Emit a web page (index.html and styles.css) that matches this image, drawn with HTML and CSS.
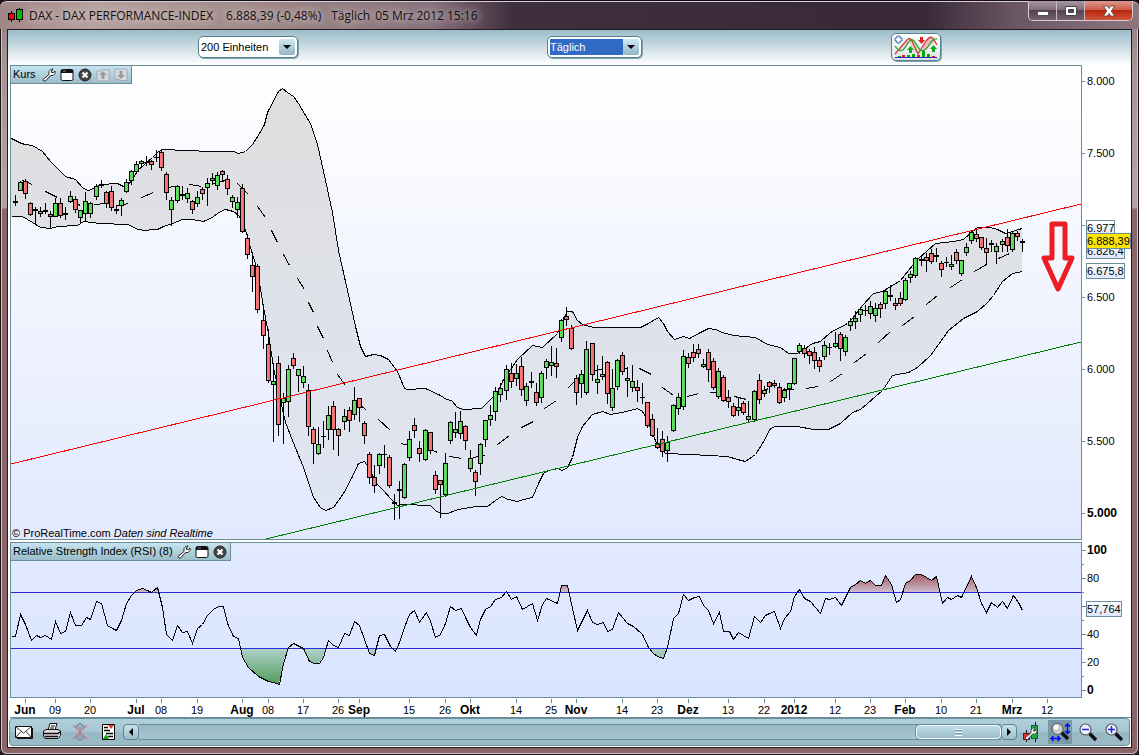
FILE: index.html
```html
<!DOCTYPE html>
<html lang="de">
<head>
    <meta charset="UTF-8">
    <meta name="viewport" content="width=device-width, initial-scale=1.0">
    <title>DAX - DAX PERFORMANCE-INDEX</title>
    <link rel="stylesheet" href="styles.css">
</head>
<body>
    <!-- Shared icons -->
    <svg class="symbols" aria-hidden="true">
        <symbol id="wrench" viewBox="0 0 14 14">
            <path d="M1 11.5 7 6.5V3.5L9.5 1H11L9.5 3V4.5H11.5L13 3V5.5L11 7.5H8.5L3.5 13H2L1 12Z" fill="#fff" stroke="#222"/>
        </symbol>
        <symbol id="panel-window" viewBox="0 0 14 14">
            <rect x="1" y="1.5" width="12" height="11" rx="1.5" fill="#fff" stroke="#111"/>
            <path d="M1 5V3Q1 1.5 2.5 1.5H11.5Q13 1.5 13 3V5Z" fill="#111"/>
            <path d="M3 3H6" stroke="#889"/>
        </symbol>
        <symbol id="close" viewBox="0 0 14 14">
            <circle cx="7" cy="7" r="6" fill="#444" stroke="#222"/>
            <path d="M4.5 4.5 9.5 9.5M9.5 4.5 4.5 9.5" stroke="#fff" stroke-width="2.2"/>
        </symbol>
        <symbol id="move" viewBox="0 0 14 14">
            <path d="M1 3H5L6 1.5H13V13H1Z" fill="#d6dcdd" stroke="#a3adb0"/>
            <path d="M7 3 11 7H8.5V11H5.5V7H3Z" fill="#979d9f"/>
        </symbol>
        <symbol id="lens" viewBox="0 0 20 20">
            <path d="M11.5 11.5 18 18" stroke="#111" stroke-width="3.5"/>
            <circle cx="7.5" cy="7.5" r="5.5" fill="#eef5ff" stroke="#555" stroke-width="1.2"/>
        </symbol>
    </svg>

    <div class="window">
        <header class="titlebar">
            <svg class="app-icon" width="16" height="16" viewBox="0 0 16 16" aria-hidden="true">
                <path d="M3.5 4V15M11.5 1V15" stroke="#000"/>
                <rect x=".5" y="6.5" width="6" height="6" fill="#f00" stroke="#000"/>
                <rect x="8.5" y="2.5" width="6" height="10" fill="#0b0" stroke="#000"/>
            </svg>
            <h1 class="title">
                <span class="name">DAX - DAX PERFORMANCE-INDEX</span>
                <span class="quote">6.888,39 (-0,48%)</span>
                <span class="period">Täglich</span>
                <span>05 Mrz 2012 15:16</span>
            </h1>
            <div class="window-buttons">
                <button class="minimize" aria-label="Minimieren">
                    <svg width="12" height="12" viewBox="0 0 12 12"><rect x=".5" y="6.5" width="11" height="4" fill="#fff" stroke="#555"/></svg>
                </button>
                <button class="maximize" aria-label="Maximieren">
                    <svg width="12" height="12" viewBox="0 0 12 12"><path d="M.5 1.5H11.5V10.5H.5ZM3.500 4.500V7.500H8.500V4.500Z" fill="#fff" fill-rule="evenodd" stroke="#444"/></svg>
                </button>
                <button class="close" aria-label="Schließen">
                    <svg width="12" height="12" viewBox="0 0 12 12"><path d="M.5 1H4.200L6 3.500 7.800 1H11.500L8.300 6 11.500 11H7.800L6 8.500 4.200 11H.5L3.700 6Z" fill="#fff" stroke="#544" stroke-width=".8"/></svg>
                </button>
            </div>
        </header>

        <main class="client">
            <div class="toolbar">
                <div class="combo units">
                    <select aria-label="Anzahl Einheiten"><option>200 Einheiten</option></select>
                    <span class="combo-arrow"></span>
                </div>
                <div class="combo timeframe">
                    <select aria-label="Zeiteinheit"><option>Täglich</option></select>
                    <span class="combo-arrow"></span>
                </div>
                <button class="indicator-button" aria-label="Indikator hinzufügen">
                    <svg width="44" height="24" viewBox="0 0 44 24">
                        <path d="M7 14 15 4 18 5 24 18 31 9 25 17 21 18 16 8Z" fill="#f5caca"/>
                        <path d="M28 12 35 2 38 2 41 7 36 10 31 16Z" fill="#f5bcbc"/>
                        <path d="M18 6H20L27 15 24 19Z" fill="#c8efc0"/>
                        <path d="M1 19 13 5Q16 2 18 6L24 19 32 6Q37-1 40 5L43 10" fill="none" stroke="#d03838" stroke-width="1.300"/>
                        <path d="M1 11Q7 20 12 11T20 6L26 15Q31 17 35 10T43 4" fill="none" stroke="#22a522" stroke-width="1.300"/>
                        <path d="M3 1H6V3H8V6H6V8H3V6H1V3H3Z" fill="#fff" stroke="#3d62b5"/>
                        <path d="M26 2H29V5H31L27.500 9 24 5H26Z" fill="#e32222"/>
                        <path d="M16.500 11 20 15H18V18H15V15H13ZM39.500 10 43 14H41V17H38V14H36Z" fill="#0caa20"/>
                        <path d="M4 22V21H7V22ZM13 22V20H16V22ZM18 22V19H21V22ZM28 22V16H31V22ZM33 22V19H36V22Z" fill="#0a0"/>
                        <path d="M8 20H11V22H8ZM23 20H26V22H23ZM38 21H41V22H38Z" fill="#d22"/>
                        <path d="M1 22.500H43" stroke="#2828c0"/>
                    </svg>
                </button>
            </div>

            <section class="panel price-panel">
                <div class="panel-header">
                    <h2>Kurs</h2>
                    <button aria-label="Einstellungen"><svg width="14" height="14"><use href="#wrench"/></svg></button>
                    <button aria-label="Fenster"><svg width="14" height="14"><use href="#panel-window"/></svg></button>
                    <button aria-label="Schließen"><svg width="14" height="14"><use href="#close"/></svg></button>
                    <button aria-label="Nach oben"><svg width="14" height="14"><use href="#move"/></svg></button>
                    <button aria-label="Nach unten"><svg class="flip" width="14" height="14"><use href="#move"/></svg></button>
                </div>
                <svg class="chart" id="price-chart" viewBox="10 65 1121 475" role="img" aria-label="DAX Kursverlauf">
                    <defs>
                        <linearGradient id="price-bg" x1="0" y1="0" x2="0" y2="1">
                            <stop offset="0" stop-color="#fff"/>
                            <stop offset="1" stop-color="#e2e9fe"/>
                        </linearGradient>
                        <linearGradient id="band-bg" x1="0" y1="0" x2="0" y2="1">
                            <stop offset="0" stop-color="#dedede"/>
                            <stop offset="1" stop-color="#dfe5f3"/>
                        </linearGradient>
                        <linearGradient id="tag-bg" x1="0" y1="0" x2="0" y2="1">
                            <stop offset="0" stop-color="#fff"/>
                            <stop offset="1" stop-color="#dde7ff"/>
                        </linearGradient>
                        <linearGradient id="up-bg"><stop offset="0" stop-color="#6aec6a"/><stop offset="1" stop-color="#4ccf4c"/></linearGradient>
                        <linearGradient id="down-bg"><stop offset="0" stop-color="#ff8484"/><stop offset="1" stop-color="#e46464"/></linearGradient>
                    </defs>
                    <rect class="plot" x="10.500" y="65.500" width="1071" height="474" fill="url(#price-bg)"/>
                    <g id="bands" class="crisp"></g>
                    <g id="candles" class="crisp"></g>
                    <path class="trend-up crisp" d="M11 464 1081 204"/>
                    <path class="trend-low crisp" d="M266 539 1081 342"/>
                    <path class="arrow" d="M1052 224H1065V258H1072L1058 289 1044 258H1052Z"/>
                    <g id="price-axis"></g>
                </svg>
                <p class="copyright">© ProRealTime.com <em>Daten sind Realtime</em></p>
            </section>

            <section class="panel rsi-panel">
                <div class="panel-header">
                    <h2>Relative Strength Index (RSI) (8)</h2>
                    <button aria-label="Einstellungen"><svg width="14" height="14"><use href="#wrench"/></svg></button>
                    <button aria-label="Fenster"><svg width="14" height="14"><use href="#panel-window"/></svg></button>
                    <button aria-label="Schließen"><svg width="14" height="14"><use href="#close"/></svg></button>
                </div>
                <svg class="chart" id="rsi-chart" viewBox="10 542 1121 176" role="img" aria-label="Relative Strength Index">
                    <defs>
                        <linearGradient id="rsi-bg" x1="0" y1="0" x2="0" y2="1">
                            <stop offset="0" stop-color="#e2eaff"/>
                            <stop offset="1" stop-color="#d9e4ff"/>
                        </linearGradient>
                        <linearGradient id="over-bg" gradientUnits="userSpaceOnUse" x1="0" y1="572" x2="0" y2="592">
                            <stop offset="0" stop-color="#a04c54"/>
                            <stop offset="1" stop-color="#cdbccd"/>
                        </linearGradient>
                        <linearGradient id="under-bg" gradientUnits="userSpaceOnUse" x1="0" y1="648" x2="0" y2="686">
                            <stop offset="0" stop-color="#b2d2cc"/>
                            <stop offset="1" stop-color="#4c9a58"/>
                        </linearGradient>
                        <clipPath id="over-clip"><rect x="11" y="543" width="1070" height="49"/></clipPath>
                        <clipPath id="under-clip"><rect x="11" y="648" width="1070" height="49"/></clipPath>
                    </defs>
                    <rect class="plot" x="10.500" y="542.500" width="1071" height="155" fill="url(#rsi-bg)"/>
                    <g id="rsi" class="crisp"></g>
                    <g id="rsi-axis"></g>
                    <g id="time-axis"></g>
                </svg>
            </section>

            <footer class="bottombar">
                <div class="tools">
                    <button aria-label="E-Mail">
                        <svg width="20" height="20" viewBox="0 0 20 20"><path d="M1.500 4.500H17.500V15.500H1.500Z" fill="#fff" stroke="#111"/><path d="M2 5 9.500 11 17 5M2 15 7 9.500M17 15 12 9.500" fill="none" stroke="#333"/><path d="M3 16.500H18.500V6" fill="none" stroke="#111"/></svg>
                    </button>
                    <button aria-label="Drucken">
                        <svg width="20" height="20" viewBox="0 0 20 20"><path d="M6 8 8 1.500H15L13 8Z" fill="#fff" stroke="#111"/><path d="M9 4H13M8 6H12" stroke="#111"/><path d="M1.500 9 4 7.500H16L18.500 9V13.500L16 16.500H3L1.500 14Z" fill="#ddd" stroke="#111"/><path d="M2 11.500H16L18 10M3 14.500H16" stroke="#111" fill="none" stroke-width="1.500"/></svg>
                    </button>
                    <button class="unlink" aria-label="Verknüpfung">
                        <svg width="20" height="20" viewBox="0 0 20 20"><path d="M7 7V4Q10 0 13 4V7M7 13V16Q10 20 13 16V13M10 5V15" fill="none" stroke="#6f8e9b" stroke-width="2"/><path d="M3 3 17 17M17 3 3 17" stroke="#d46f78" stroke-width="1.400"/></svg>
                    </button>
                    <button aria-label="Liste">
                        <svg width="20" height="20" viewBox="0 0 20 20"><path d="M4.500 2.500H16.500V17.500H4.500Z" fill="#fff" stroke="#000"/><path d="M6 5.500H10M6 8.500H12M8 11.500H15M10 14.500H15" stroke="#000" stroke-width="1.500"/><path d="M10 3H16L13 7Z" fill="#e33"/><path d="M5 17 8 12 11 17Z" fill="#0a0"/></svg>
                    </button>
                </div>
                <div class="scrollbar">
                    <button class="scroll-step" aria-label="Zurück"><svg width="6" height="8" viewBox="0 0 6 8"><path d="M5 0V8L1 4Z"/></svg></button>
                    <div class="scroll-track"><div class="scroll-thumb"><span></span></div></div>
                    <button class="scroll-step" aria-label="Vor"><svg width="6" height="8" viewBox="0 0 6 8"><path d="M1 0V8L5 4Z"/></svg></button>
                </div>
                <div class="tools zoom-tools">
                    <button aria-label="Darstellung">
                        <svg width="20" height="20" viewBox="0 0 20 20"><path d="M13.500 0V20M4.500 8V20" stroke="#111"/><rect x="9.500" y="3.500" width="6" height="13" fill="#1cae3c" stroke="#064"/><rect x="1.500" y="11.500" width="6" height="6" fill="#d33" stroke="#711"/><path d="M3 16 9 11V8L11.500 5.500H13L11.500 8V9H13.500L15 7.500V10L13 12H10.500L5 18Z" fill="#fff" stroke="#333" stroke-width=".8"/></svg>
                    </button>
                    <button class="selected" aria-label="Automatischer Zoom">
                        <svg width="20" height="20" viewBox="0 0 20 20"><path d="M11 10 18 17" stroke="#111" stroke-width="3.500"/><circle cx="7.500" cy="7" r="5.500" fill="#ccc" stroke="#555"/><circle cx="6" cy="5" r="2.500" fill="#fff"/><path d="M17.500 2V11M15 4.500 17.500 2 20 4.500M15 9 17.500 11.500 20 9M2 16.500H10M3.500 14 1 16.500 3.500 19M7.500 14 10 16.500 7.500 19" fill="none" stroke="#00f" stroke-width="1.400"/></svg>
                    </button>
                    <button aria-label="Verkleinern">
                        <svg width="20" height="20" viewBox="0 0 20 20"><use href="#lens"/><path d="M4 7.500H11" stroke="#22e" stroke-width="1.500"/></svg>
                    </button>
                    <button aria-label="Vergrößern">
                        <svg width="20" height="20" viewBox="0 0 20 20"><use href="#lens"/><path d="M4 7.500H11M7.500 4V11" stroke="#22e" stroke-width="1.500"/></svg>
                    </button>
                </div>
            </footer>
        </main>
    </div>

    <script src="chart.js"></script>
</body>
</html>
```

FILE: styles.css
```css
* {
    box-sizing: border-box;
}
body {
    margin: 0;
    background-color: #14101a;
    font-family: "Liberation Sans", Arial, sans-serif;
    font-size: 11px;
    color: #000;
}
button {
    padding: 0;
    border: none;
    background: none;
    display: flex;
    align-items: center;
    justify-content: center;
}
svg {
    display: block;
}
.symbols {
    position: absolute;
    width: 0;
    height: 0;
}
.window {
    padding: 0 7px 7px;
    border-radius: 7px;
    background: linear-gradient(#8d7577, #a59494 60px, #b3a3a3 207px, #8a6466 210px, #8a6466);
    box-shadow: inset 0 0 0 1px #1b1218, inset 0 0 0 2px #d2c3c5;
}

/* Title bar */
.titlebar {
    height: 29px;
    margin: 0 -7px;
    padding-left: 8px;
    display: flex;
    align-items: center;
    border-radius: 7px 7px 0 0;
    border-top: 1px solid #120d18;
    box-shadow: inset 0 1px 0 #d9cdd2;
    background: linear-gradient(90deg, #a18688, #b5a09d 8%, #9a8486 25%, #84707a 38%, #3f2e3e 45%, #382838 81%, #6a5662 89%, #8d7680);
}
.title {
    margin: 0 0 0 5px;
    display: flex;
    font-family: "Open Sans", "Noto Sans", sans-serif;
    font-size: 12px;
    font-weight: normal;
    white-space: nowrap;
    color: #111;
    text-shadow: 0 0 8px #d8c9c5, 0 0 8px #d8c9c5;
}
.name {
    margin-right: 13px;
}
.quote {
    margin-right: 10px;
}
.period {
    margin-right: 5px;
}
.window-buttons {
    display: flex;
    align-self: flex-start;
    margin-left: auto;
    margin-right: 6px;
    border: 1px solid #d9cdd2;
    border-top: none;
    border-radius: 0 0 5px 5px;
    overflow: hidden;
}
.window-buttons button {
    width: 28px;
    height: 19px;
    border-right: 1px solid #c8babf;
    background: linear-gradient(#a8979f, #7d6b76 48%, #53414f 50%, #75636f);
}
.window-buttons .close {
    width: 47px;
    border-right: none;
    background: linear-gradient(#dc9a8c, #cc5a45 48%, #b8240d 50%, #d0553a);
}

/* Client area */
.client {
    border: 1px solid #241a20;
    background-color: #fff;
}
.toolbar {
    height: 35px;
    padding: 0 190px 2px;
    display: flex;
    align-items: center;
    justify-content: space-between;
    background: linear-gradient(#9bbcc8, #fff);
}
.combo {
    height: 22px;
    padding: 2px;
    display: flex;
    border: 1px solid #54808f;
    border-radius: 5px;
    background-color: #fff;
    box-shadow: 1px 1px 0 #7fa3b0;
}
.combo select {
    flex: 1;
    min-width: 0;
    padding: 0;
    border: none;
    appearance: none;
    background: none;
    font: inherit;
    color: inherit;
}
.units {
    width: 100px;
}
.timeframe {
    width: 95px;
}
.timeframe select {
    background-color: #316ac5;
    color: #fff;
}
.combo-arrow {
    width: 16px;
    display: flex;
    align-items: center;
    justify-content: center;
    border-radius: 2px;
    background: linear-gradient(#cdeaf4, #94b6c2);
}
.combo-arrow::before {
    content: "";
    border: 4px solid transparent;
    border-top-color: #000;
    border-bottom: none;
}
.indicator-button {
    width: 50px;
    height: 28px;
    border: 1px solid #54808f;
    border-radius: 5px;
    background: linear-gradient(#fff, #dde3e6);
    box-shadow: 1px 1px 0 #7fa3b0;
}

/* Chart panels */
.panel {
    position: relative;
    margin-left: 2px;
}
.price-panel {
    margin-bottom: 2px;
}
.panel-header {
    position: absolute;
    top: 0;
    left: 0;
    height: 19px;
    padding: 0 3px 0 2px;
    display: flex;
    align-items: center;
    gap: 4px;
    border: 1px solid #6b8c99;
    background: linear-gradient(#c5e4ef, #9bbdc9);
}
.panel-header h2 {
    margin: 0;
    padding-bottom: 2px;
    font-size: 11px;
    font-weight: normal;
    white-space: nowrap;
}
.price-panel h2 {
    margin-right: 2px;
}
.flip {
    transform: scaleY(-1);
}
.chart {
    width: 100%;
    height: auto;
}
.copyright {
    position: absolute;
    left: 2px;
    bottom: 0;
    margin: 0;
    line-height: 14px;
}
.crisp {
    shape-rendering: crispEdges;
}
.plot {
    stroke: #6b8c99;
}
.band-fill {
    fill: url(#band-bg);
}
.line {
    fill: none;
    stroke: #000;
}
.up {
    fill: url(#up-bg);
    stroke: #000;
}
.down {
    fill: url(#down-bg);
    stroke: #000;
}
.trend-up {
    stroke: #f00;
}
.trend-low {
    stroke: #008000;
}
.arrow {
    fill: none;
    stroke: #ee1c24;
    stroke-width: 5;
    stroke-linejoin: round;
}
.tick {
    stroke: #6b8c99;
}
.level {
    stroke: #2a2ad8;
}
.chart text {
    font-size: 11px;
}
.chart .major {
    font-size: 12px;
    font-weight: bold;
}
.time {
    text-anchor: middle;
}
.tag {
    fill: url(#tag-bg);
    stroke: #6b8c99;
}
.tag.last {
    fill: #ffe600;
}

/* Bottom bar */
.bottombar {
    height: 28px;
    margin: 0 1px 1px;
    padding: 0 5px 0 4px;
    display: flex;
    align-items: center;
    gap: 5px;
    border: 1px solid #6b8c99;
    border-radius: 4px;
    background: linear-gradient(#b0d0dc, #a4c5d1 50%, #98b8c4 52%, #9bbbc7);
}
.tools {
    display: flex;
    gap: 8px;
}
.zoom-tools {
    gap: 6px;
}
.tools button {
    width: 20px;
    height: 24px;
}
.tools .selected {
    width: 24px;
    background-color: #7899a6;
}
.unlink {
    opacity: 0.8;
}
.scrollbar {
    flex: 1;
    height: 16px;
    display: flex;
}
.scroll-step {
    width: 16px;
    border: 1px solid #5f828f;
    border-radius: 4px;
    background: linear-gradient(#c5e2ec, #9dbfcb);
}
.scroll-track {
    flex: 1;
    display: flex;
    justify-content: flex-end;
    border-top: 1px solid #6b8c99;
    border-bottom: 1px solid #6b8c99;
    background: linear-gradient(#98b8c4, #a5c6d2);
}
.scroll-thumb {
    width: 85px;
    display: flex;
    align-items: center;
    justify-content: center;
    border: 1px solid #fff;
    border-radius: 4px;
    outline: 1px solid #6b8c99;
    background: linear-gradient(#bedce7, #9cbeca);
}
.scroll-thumb span {
    width: 7px;
    height: 7px;
    background: repeating-linear-gradient(#fff 0 1px, #7798a5 1px 2px, transparent 2px 3px);
}
```

FILE: chart.js
```js
// Candles: x, high, body top, body bottom, low, direction (1 up, -1 down, 0 doji)
const candles = [
    [15,195,201,202,205,0],[20,181,182,190,190,1],[25,179,181,193,198,-1],[30,202,203,214,215,-1],[35,207,209,210,223,0],
    [40,207,211,213,216,-1],[45,203,210,211,213,0],[50,211,214,216,227,-1],[55,198,203,216,216,1],[60,198,203,215,217,-1],
    [65,207,213,214,219,1],[70,191,196,201,202,1],[75,196,199,209,212,-1],[80,210,210,217,222,1],[85,192,201,213,220,1],
    [90,202,203,213,217,1],[96,184,186,196,199,1],[101,180,184,185,187,0],[106,191,192,203,207,-1],[111,186,191,207,210,-1],
    [116,205,209,210,213,0],[121,198,200,205,215,1],[126,179,182,191,192,1],[131,170,171,180,184,1],[136,161,164,171,173,1],
    [141,160,161,163,165,1],[146,156,162,162,165,0],[151,160,161,164,169,-1],[156,150,157,157,161,0],[161,149,152,167,170,-1],
    [166,172,174,192,199,-1],[171,197,200,209,225,1],[177,185,186,200,202,1],[182,186,194,195,199,0],[187,188,193,198,202,1],
    [192,200,201,209,213,-1],[197,191,197,203,206,1],[202,187,189,193,199,-1],[207,178,183,187,205,1],[212,173,178,180,184,1],
    [217,172,175,185,189,1],[222,170,171,174,181,-1],[227,175,179,188,194,-1],[232,195,197,201,207,1],[237,197,202,209,217,1],
    [242,184,188,231,232,-1],[247,234,238,254,258,-1],[252,255,265,276,291,-1],[257,264,266,309,312,-1],[263,305,320,335,348,-1],
    [268,329,344,380,382,-1],[273,363,381,384,441,1],[278,356,363,424,435,-1],[283,393,398,402,443,1],[288,365,369,401,416,1],
    [293,353,358,365,368,-1],[298,369,369,375,391,1],[303,366,376,382,387,1],[308,384,390,426,435,-1],[313,427,429,443,463,-1],
    [318,427,444,453,454,1],[323,421,436,436,447,0],[328,406,415,429,439,1],[333,401,406,429,449,-1],[338,428,429,435,455,-1],
    [344,409,416,421,429,1],[349,407,410,420,431,-1],[354,387,400,414,419,1],[359,398,398,407,421,-1],[364,421,423,435,443,-1],
    [369,452,454,477,483,-1],[374,465,477,485,492,-1],[379,453,454,465,473,1],[384,445,454,454,467,0],[389,455,457,485,487,-1],
    [394,494,502,503,519,0],[399,481,489,490,518,0],[404,463,464,497,498,1],[409,431,439,457,460,1],[414,418,425,430,437,-1],
    [419,441,448,453,461,-1],[425,429,430,459,460,1],[430,432,432,450,453,-1],[435,471,475,489,493,-1],[440,480,480,484,517,-1],
    [445,453,463,494,496,1],[450,421,422,440,443,1],[455,412,429,432,437,1],[460,411,421,433,438,1],[465,425,426,440,449,-1],
    [470,450,458,468,471,1],[475,470,472,481,495,-1],[480,443,444,463,474,1],[485,420,420,439,446,1],[490,405,415,419,425,1],
    [495,387,391,411,420,1],[500,383,388,394,401,1],[506,365,369,390,399,1],[511,363,373,381,387,-1],[516,364,373,378,385,1],
    [521,357,366,389,395,-1],[526,383,386,400,405,1],[531,372,381,382,387,0],[536,383,392,402,405,-1],[541,371,373,397,402,1],
    [546,359,361,367,378,1],[551,346,362,365,375,1],[556,348,363,366,377,-1],[561,319,320,337,341,1],[566,307,316,319,325,-1],
    [571,325,328,348,349,-1],[576,375,378,392,404,-1],[581,370,374,383,397,1],[586,341,349,392,394,1],[592,343,343,374,380,-1],
    [597,365,379,382,393,1],[602,356,374,376,379,1],[607,361,362,393,403,-1],[612,369,388,407,410,1],[617,359,360,386,389,1],
    [622,352,355,371,374,-1],[627,367,378,380,396,1],[632,365,381,387,391,1],[637,380,387,390,401,-1],[642,383,397,397,403,0],
    [647,402,402,425,427,-1],[652,414,419,435,436,-1],[657,428,443,447,448,-1],[662,431,439,451,456,-1],[667,436,442,450,461,1],
    [673,404,405,430,431,1],[678,393,397,408,414,1],[683,350,356,406,409,1],[688,353,357,363,367,-1],[693,344,352,357,361,-1],
    [698,344,349,353,357,-1],[703,359,364,366,367,1],[708,349,352,369,381,-1],[713,358,361,387,389,-1],[718,368,371,396,398,1],
    [723,375,377,400,401,-1],[728,390,397,401,407,-1],[733,403,406,415,416,-1],[738,397,407,410,415,1],[743,401,403,412,414,-1],
    [748,401,416,419,421,1],[754,390,391,419,421,1],[759,374,380,399,403,-1],[764,386,390,393,396,1],[769,381,382,386,392,-1],
    [774,380,383,385,387,-1],[779,383,387,402,403,-1],[784,388,390,397,401,1],[789,383,383,388,399,1],[794,358,358,383,384,1],
    [799,343,345,351,353,1],[804,345,348,353,357,-1],[809,349,351,355,363,-1],[814,347,352,360,368,-1],[819,357,360,366,371,-1],
    [824,341,345,356,359,1],[829,343,347,347,354,0],[835,332,343,346,347,1],[840,332,334,348,360,-1],[845,335,337,351,355,1],
    [850,318,321,325,330,1],[855,311,318,321,328,1],[860,307,309,314,321,1],[865,305,310,310,315,0],[870,301,306,313,318,1],
    [875,303,308,315,321,1],[880,302,304,308,317,-1],[885,289,291,303,308,1],[890,285,295,296,300,0],[895,298,303,305,309,-1],
    [900,292,298,303,305,-1],[905,278,280,299,300,1],[910,271,274,277,282,1],[915,257,258,275,277,1],[921,255,259,260,265,0],
    [926,253,257,260,271,-1],[931,249,253,261,263,-1],[936,248,255,256,261,0],[941,261,263,269,276,-1],[946,257,262,262,266,0],
    [951,255,264,266,269,1],[956,249,252,260,263,-1],[961,260,260,273,275,1],[966,243,247,252,255,1],[971,231,232,240,243,1],
    [976,229,234,238,241,-1],[981,237,237,247,249,-1],[986,238,248,252,264,-1],[991,240,243,244,251,0],[996,243,246,251,263,1],
    [1002,239,241,244,251,1],[1007,229,237,245,251,-1],[1012,231,233,249,251,1],[1017,231,233,236,240,-1],[1022,239,241,242,251,0]
];

// Bollinger bands
const upperBand = '11,138 21,143 25,144 32,145 42,151 50,161 65,176 75,179 83,188 88,190 93,188 100,184 117,183 125,187 132,179 137,170 143,165 152,157 157,152 162,149 210,151 233,151 238,153 245,151 252,144 259,133 264,124 267,112 278,91 282,88 287,92 293,96 298,103 310,123 317,144 325,180 332,212 338,250 347,290 355,326 360,346 365,356 373,354 380,355 388,359 397,371 404,388 407,389 425,388 440,395 446,399 451,400 457,407 463,409 481,408 490,399 497,392 503,379 508,372 517,359 532,345 542,347 557,333 563,318 567,311 572,311 577,320 582,324 593,327 640,327 648,323 658,317 663,323 667,331 674,339 683,336 689,338 700,332 708,328 715,329 722,332 733,335 755,337 767,344 780,347 788,353 797,353 802,350 812,343 820,341 830,332 847,323 852,318 862,305 873,293 882,291 900,280 908,270 917,259 935,243 953,241 963,239 972,231 977,227 990,227 997,229 1005,233 1012,231 1018,229 1022,228';
const lowerBand = '11,216 22,216 32,222 40,227 50,228 57,226 77,225 83,221 100,223 127,224 132,226 137,229 145,230 152,229 157,229 163,226 172,223 182,219 192,219 203,221 212,217 218,212 225,209 233,211 238,215 243,223 248,240 250,247 257,270 263,307 268,333 273,367 280,400 285,422 292,440 303,467 313,497 320,507 325,510 333,507 343,493 352,476 358,463 364,461 370,470 375,482 383,490 390,498 397,505 403,504 430,505 435,510 440,513 447,513 458,509 475,506 487,506 495,500 501,496 508,499 517,501 523,499 532,497 538,483 543,473 548,470 557,468 562,470 567,467 572,457 577,437 582,426 592,414 602,411 610,414 622,412 637,408 642,411 647,420 652,433 657,445 665,453 690,454 727,456 737,459 745,461 755,454 762,443 770,428 775,426 797,426 813,429 828,429 840,423 852,412 860,409 882,390 892,375 908,372 917,367 930,355 938,344 948,330 963,318 977,311 987,302 993,295 1002,281 1012,273 1022,271';

// Dashes of the moving average
const average = [
    [22,180,32,184],[45,191,57,197],[70,200,80,205],[94,204,105,203],[117,205,128,203],[141,197,153,192],[165,187,177,186],[189,184,201,186],
    [213,183,225,180],[237,183,248,194],[257,206,265,217],[271,230,277,242],[283,254,289,265],[297,278,304,289],[308,302,313,312],
    [317,326,323,338],[327,350,332,362],[337,374,345,385],[357,402,366,410],[378,419,390,430],[401,443,412,446],[426,447,437,452],
    [449,456,461,458],[473,457,485,455],[497,444,509,435],[521,427,533,421],[544,408,556,400],[567,388,578,377],[591,370,602,369],
    [615,370,627,368],[639,368,651,374],[662,387,673,395],[687,396,698,393],[710,392,722,393],[734,396,746,399],[757,393,768,388],
    [782,389,793,389],[806,388,818,386],[830,381,842,373],[854,362,866,353],[878,342,890,331],[902,325,914,316],[926,304,937,295],
    [950,287,962,279],[974,271,986,264],[998,258,1009,253]
];

const rsiLine = '11,636 15,636 20,614 25,624 31,640 36,635 40,637 45,635 51,639 55,621 60,633 65,631 70,612 75,625 81,625 86,617 90,619 96,601 101,603 107,625 112,628 116,630 121,620 126,603 131,595 136,590 142,588 147,590 151,592 157,587 162,607 166,634 172,640 177,625 182,632 187,631 192,643 197,628 202,624 207,615 213,609 218,606 223,606 227,623 233,636 238,638 242,657 248,667 258,676 268,681 273,682 279,684 283,663 288,647 293,643 303,648 309,661 314,663 319,663 323,657 328,640 333,645 338,647 344,633 349,635 354,621 359,625 364,639 369,653 374,655 379,635 384,634 390,646 395,651 399,642 404,627 409,614 414,610 419,622 426,612 430,621 435,637 440,634 445,623 450,606 455,610 461,608 465,617 470,627 476,635 480,619 485,609 490,606 495,599 501,597 506,591 511,599 516,596 522,609 532,603 537,620 542,604 546,598 557,603 561,585 567,585 572,608 577,630 587,610 592,622 597,624 603,622 607,631 612,629 618,612 627,623 633,626 642,634 648,647 653,653 657,656 663,658 667,647 673,618 678,613 683,594 688,600 694,597 699,596 703,605 708,610 713,623 719,612 723,631 729,631 733,639 738,632 743,635 748,638 754,616 760,622 765,615 769,613 774,611 780,628 784,618 790,611 794,596 799,589 804,598 810,601 820,613 825,598 829,599 835,597 841,605 850,587 855,584 860,580 865,583 870,580 875,585 881,585 885,575 891,584 896,602 900,599 905,583 910,580 915,574 921,574 931,580 936,576 942,603 947,597 951,599 957,595 961,597 971,576 976,587 981,603 986,612 991,602 997,607 1002,601 1007,608 1013,595 1018,602 1022,610';

const dates = [
    [25,'Jun'],[55,'09'],[90,'20'],[136,'Jul'],[161,'08'],[197,'19'],[242,'Aug'],[268,'08'],[303,'17'],[338,'26'],[359,'Sep'],
    [409,'15'],[445,'26'],[470,'Okt'],[516,'14'],[551,'25'],[576,'Nov'],[622,'14'],[657,'23'],[688,'Dez'],[728,'13'],[764,'22'],
    [794,'2012'],[835,'12'],[870,'23'],[905,'Feb'],[941,'10'],[976,'21'],[1012,'Mrz'],[1047,'12']
];

function fill(id, markup) {
    document.getElementById(id).innerHTML = markup;
}

function tick(x1, y1, x2, y2) {
    return `<path class="tick" d="M${x1} ${y1}L${x2} ${y2}"/>`;
}

function label(x, y, text, cls) {
    return `<text x="${x}" y="${y}" class="${cls}">${text}</text>`;
}

function tag(y, width, text, cls) {
    return `<rect class="tag ${cls}" x="1086.5" y="${y - 7.5}" width="${width}" height="15"/>` + label(1087, y + 4, text, '');
}

// Price chart
const lowerReversed = lowerBand.split(' ').reverse().join(' ');
fill('bands',
    `<polygon class="band-fill" points="${upperBand} ${lowerReversed}"/>` +
    `<g transform="translate(0.5 0.5)"><polyline class="line" points="${upperBand}"/><polyline class="line" points="${lowerBand}"/>` +
    average.map(([x1, y1, x2, y2]) => `<path class="line" d="M${x1} ${y1}L${x2} ${y2}"/>`).join('') + '</g>');

fill('candles', candles.map(([x, high, top, bottom, low, dir]) => {
    const wick = `<path class="line" d="M${x + 0.5} ${high}V${low + 1}"/>`;
    if (dir === 0) {
        return wick + `<rect x="${x - 2}" y="${top}" width="5" height="${bottom - top + 1}"/>`;
    }
    return wick + `<rect class="${dir > 0 ? 'up' : 'down'}" x="${x - 1.5}" y="${top + 0.5}" width="4" height="${bottom - top}"/>`;
}).join(''));

let priceAxis = '';
['8.000', '7.500', '', '6.500', '6.000', '5.500', '5.000'].forEach((price, i) => {
    const y = 81 + i * 72;
    priceAxis += tick(1082, y + 0.5, 1085, y + 0.5) + label(1087, y + 4, price, price === '5.000' ? 'major' : '');
});
priceAxis += tag(228, 28, '6.977', '') + tag(251, 38, '6.826,4', '') + tag(271, 38, '6.675,8', '') + tag(241, 44, '6.888,39', 'last');
fill('price-axis', priceAxis);

// RSI chart
fill('rsi',
    `<polygon points="11,592 ${rsiLine} 1022,592" fill="url(#over-bg)" clip-path="url(#over-clip)"/>` +
    `<polygon points="11,648 ${rsiLine} 1022,648" fill="url(#under-bg)" clip-path="url(#under-clip)"/>` +
    '<path class="level" d="M11 592.5H1081M11 648.5H1081"/>' +
    `<polyline class="line" transform="translate(0.5 0.5)" points="${rsiLine}"/>`);

let rsiAxis = '';
for (let value = 0; value <= 100; value += 10) {
    const y = 690 - value * 1.4;
    rsiAxis += tick(1082, y + 0.5, value % 20 ? 1084 : 1086, y + 0.5);
    if (value % 20 === 0 && value !== 60) {
        rsiAxis += label(1087, y + 4, value, value % 100 ? '' : 'major');
    }
}
fill('rsi-axis', rsiAxis + tag(609, 35, '57,764', ''));

fill('time-axis', dates.map(([x, text]) => {
    const major = /[A-Z]|2012/.test(text);
    return tick(x + 0.5, 699, x + 0.5, 703) + label(x, 714, text, major ? 'time major' : 'time');
}).join('') + '<path class="tick" d="M10 717.5H1131"/>');
```
